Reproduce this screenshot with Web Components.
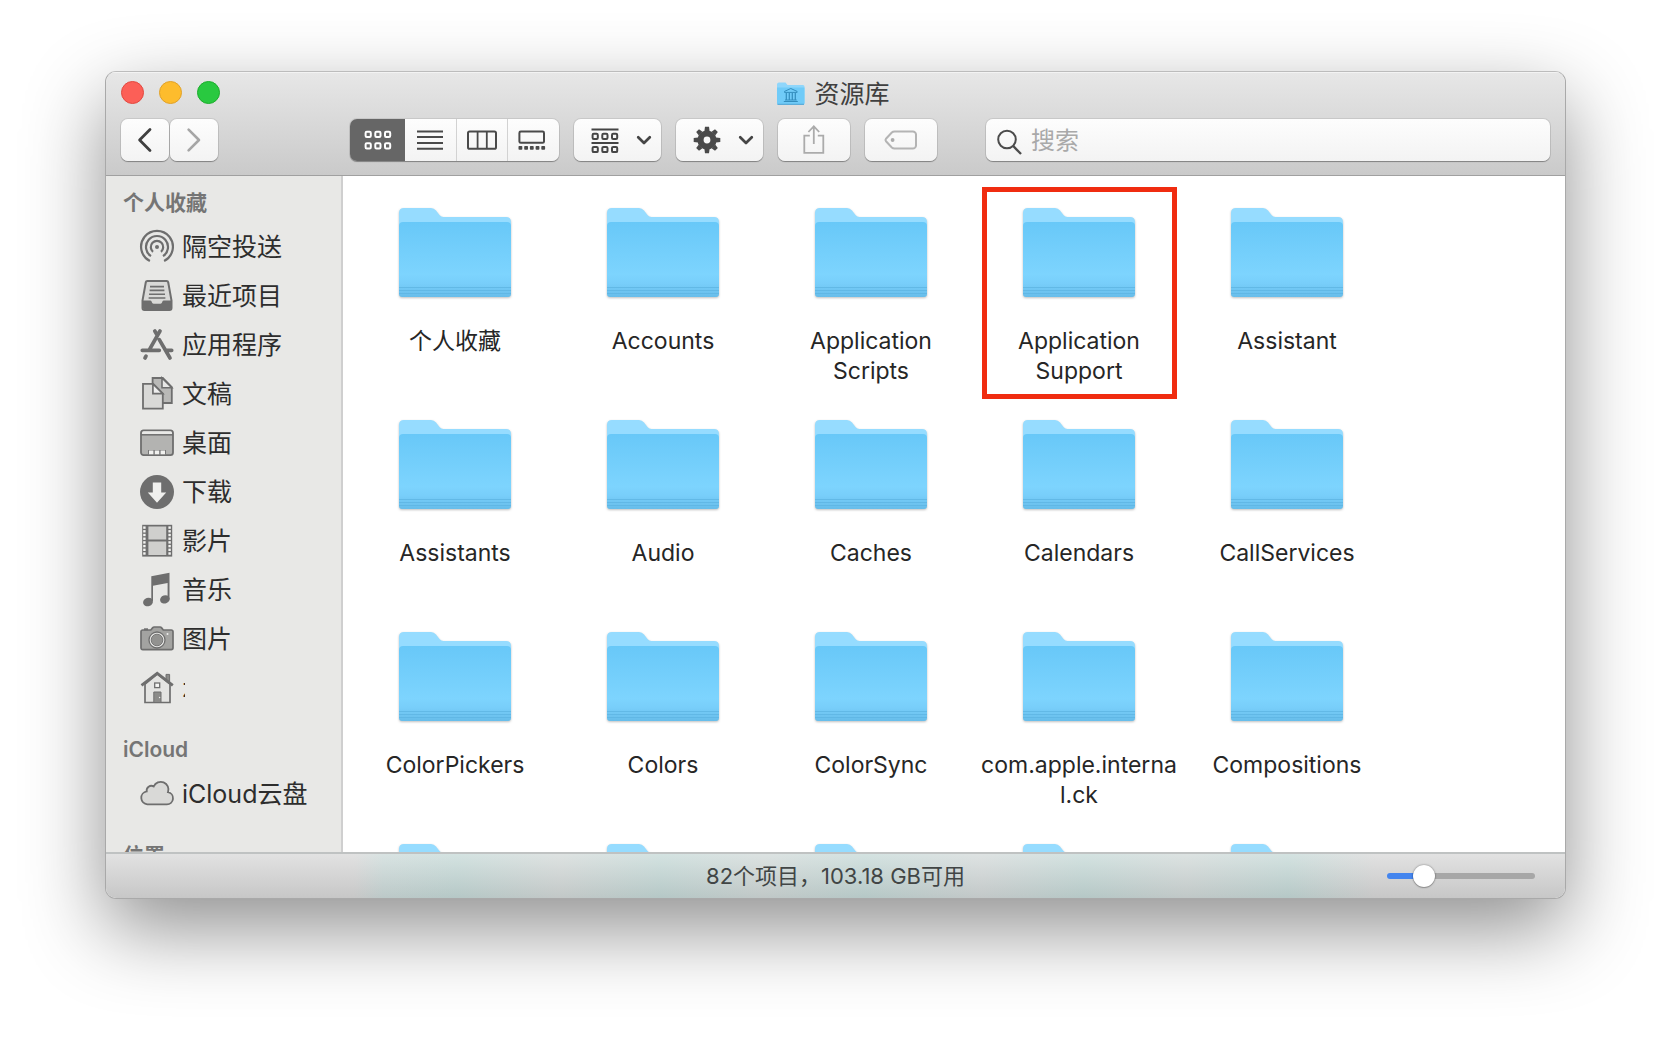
<!DOCTYPE html>
<html lang="zh-CN">
<head>
<meta charset="utf-8">
<title>资源库</title>
<style>
  html, body { margin: 0; height: 100%; background: #fff; }
  body { font-family: Inter, "Noto Sans CJK SC", sans-serif; color: #262626; }
</style>
</head>
<body>
<finder-window>
  <title-bar slot="title">资源库</title-bar>
  <tool-bar slot="toolbar"></tool-bar>
  <side-bar slot="sidebar">
    <side-group label="个人收藏">
      <side-item icon="airdrop">隔空投送</side-item>
      <side-item icon="recents">最近项目</side-item>
      <side-item icon="apps">应用程序</side-item>
      <side-item icon="docs">文稿</side-item>
      <side-item icon="desktop">桌面</side-item>
      <side-item icon="download">下载</side-item>
      <side-item icon="film">影片</side-item>
      <side-item icon="music">音乐</side-item>
      <side-item icon="camera">图片</side-item>
      <side-item icon="home" clipped>z</side-item>
    </side-group>
    <side-group label="iCloud">
      <side-item icon="cloud">iCloud云盘</side-item>
    </side-group>
    <side-group label="位置"></side-group>
  </side-bar>
  <folder-grid slot="content">
    <folder-item>个人收藏</folder-item>
    <folder-item>Accounts</folder-item>
    <folder-item>Application Scripts</folder-item>
    <folder-item marked>Application Support</folder-item>
    <folder-item>Assistant</folder-item>
    <folder-item>Assistants</folder-item>
    <folder-item>Audio</folder-item>
    <folder-item>Caches</folder-item>
    <folder-item>Calendars</folder-item>
    <folder-item>CallServices</folder-item>
    <folder-item>ColorPickers</folder-item>
    <folder-item>Colors</folder-item>
    <folder-item>ColorSync</folder-item>
    <folder-item>com.apple.internal.ck</folder-item>
    <folder-item>Compositions</folder-item>
    <folder-item></folder-item>
    <folder-item></folder-item>
    <folder-item></folder-item>
    <folder-item></folder-item>
    <folder-item></folder-item>
  </folder-grid>
  <status-bar slot="status">82个项目，103.18 GB可用</status-bar>
</finder-window>

<script>
const define = (name, html, setup) => {
  const template = document.createElement('template');
  template.innerHTML = html;
  customElements.define(name, class extends HTMLElement {
    constructor() {
      super();
      this.attachShadow({ mode: 'open' }).append(template.content.cloneNode(true));
    }
    connectedCallback() { if (setup) setup(this, this.shadowRoot); }
  });
};

const squares = (x, y, size, step) => [0, 1, 2].map(i =>
  `<rect x="${x + i * step}" y="${y}" width="${size}" height="${size}" rx="1.2"/>`).join('');
const teeth = [0, 45, 90, 135, 180, 225, 270, 315].map(a =>
  `<path d="M12.4 6 13 1.7h4l.6 4.3z" transform="rotate(${a} 15 15)"/>`).join('');
const perforations = [2.4, 27.6].map(x => [0, 1, 2, 3, 4, 5, 6, 7].map(i =>
  `<rect x="${x + .8}" y="${2.4 + i * 3.7}" width="2.4" height="2.4"/>`).join('')).join('');

/* Toolbar icons use a 30px box, sidebar icons a 34px box. */
const icons = {
  grid: [30, `<g fill="none" stroke="#fff" stroke-width="2">${squares(2.6, 6.8, 5.2, 9.7)}${squares(2.6, 18.2, 5.2, 9.7)}</g>`],
  list: [30, `<path d="M2 6.4h26M2 12.1h26M2 18h26M2 23.7h26" stroke="#4a4a4a" stroke-width="2"/>`],
  columns: [30, `<rect x="1" y="6.4" width="28" height="17.4" rx="1.6" fill="none" stroke="#4a4a4a" stroke-width="2"/><path d="M10.6 6v18M19.8 6v18" stroke="#4a4a4a" stroke-width="1.8"/>`],
  gallery: [30, `<rect x=".4" y="6.6" width="24.6" height="11.2" rx="1.4" fill="none" stroke="#4a4a4a" stroke-width="2"/><g fill="#4a4a4a">${[0,1,2,3,4].map(i => `<rect x="${-.5 + i * 5.7}" y="21" width="3.8" height="3.8" rx=".8"/>`).join('')}</g>`],
  arrange: [30, `<path d="M1.500 4.600h27M1.500 17.900h27" stroke="#454545" stroke-width="2"/><g fill="none" stroke="#454545" stroke-width="2">${squares(2.6, 8.8, 5.2, 9.7)}${squares(2.6, 21.9, 5.2, 9.7)}</g>`],
  gear: [30, `<g fill="#4a4a4a">${teeth}<path fill-rule="evenodd" d="M15 5.400a9.600 9.600 0 1 1 0 19.200 9.600 9.600 0 0 1 0-19.200zm0 6.200a3.400 3.400 0 1 0 0 6.800 3.400 3.400 0 0 0 0-6.800z"/></g>`],
  share: [30, `<g fill="none" stroke="#ababab" stroke-width="1.800"><path d="M10.800 10.700H5.300v17.200h19V10.700h-5.500M14.800 19V1.600M9.400 7l5.400-5.600L20.200 7"/></g>`],
  tag: [34, `<path d="M10.600 8.400h18.200a3.200 3.200 0 0 1 3.200 3.200v10.800a3.200 3.200 0 0 1-3.200 3.200H10.600a4 4 0 0 1-2.800-1.100L2 18.300q-1.100-1.300 0-2.600l5.800-6.200a4 4 0 0 1 2.800-1.100z" fill="none" stroke="#b4b4b4" stroke-width="2"/><circle cx="8.600" cy="17" r="1.900" fill="#ababab"/>`],
  back: [30, `<path d="M20 4.600 9.600 15 20 25.400" fill="none" stroke="#3f3f3f" stroke-width="2.800" stroke-linecap="round" stroke-linejoin="round"/>`],
  forward: [30, `<path d="M9.600 4.600 20 15 9.600 25.400" fill="none" stroke="#a6a6a6" stroke-width="2.600" stroke-linecap="round" stroke-linejoin="round"/>`],
  chevron: [16, `<path d="M2.200 5.200 8 11l5.800-5.800" fill="none" stroke="#454545" stroke-width="2.700" stroke-linecap="round" stroke-linejoin="round"/>`],
  search: [30, `<g fill="none" stroke="#4c4c4c" stroke-width="2"><circle cx="12" cy="13.500" r="8.800"/><path d="m18.200 20 7.800 8" stroke-width="2.400"/></g>`],
  library: [30, `<path d="M1 5.500Q1 3.500 3 3.500h6.500l2 2.400H27q1.500 0 1.500 1.500V24q0 1.500-1.500 1.500H2.500Q1 25.500 1 24z" fill="#8fd6fb"/><path d="M1 8.600h27.500V24q0 1.500-1.500 1.500H2.500Q1 25.500 1 24z" fill="#70cbf8"/><path d="M1.500 25.300H28" stroke="#50a3d2"/><path d="M8.500 13.400v-1l6.300-2.900 6.300 2.900v1z" fill="none" stroke="#338dbd"/><path d="M10.300 14v6.500M13.300 14v6.500M16.300 14v6.500M19.300 14v6.500M9 21h11.700M7.800 22.500h14" stroke="#338dbd" stroke-width="1.200"/>`],

  airdrop: [34, `<g fill="none" stroke="#6e6e6e" stroke-width="2.200"><path d="M9.900 31a15.900 15.900 0 1 1 14.200 0"/><path d="M11 26.200a11 11 0 1 1 12 0"/><path d="M13 21.800a6.200 6.200 0 1 1 8 0"/></g><circle cx="17" cy="17" r="2" fill="#6e6e6e"/>`],
  recents: [34, `<path d="M7.400 2h19.200a1.600 1.600 0 0 1 1.600 1.300l3.300 18.200V29a2 2 0 0 1-2 2h-25a2 2 0 0 1-2-2v-7.500L5.800 3.300A1.600 1.600 0 0 1 7.400 2z" fill="#d9d9d7" stroke="#6e6e6e" stroke-width="2"/><path d="M3 21.500h7.200q1 0 1.400 1l.5 1.200q.5 1.100 1.700 1.100h6.400q1.200 0 1.700-1.100l.5-1.200q.4-1 1.400-1H31V29a1.600 1.600 0 0 1-1.600 1.600H4.600A1.600 1.600 0 0 1 3 29z" fill="#6e6e6e"/><path d="M10 7.600h14M9.600 11.400h14.800M9 15.200h16M8.600 19h16.800" stroke="#6e6e6e" stroke-width="1.600"/>`],
  apps: [34, `<g fill="none" stroke="#6e6e6e" stroke-width="3.700" stroke-linecap="round"><path d="M14.800 3 17 6.800M20 3 9 22.300M6 28.200l-1 1.800M19.300 11.600 30 30M2.300 22.300h17M26.500 22.300h5.200"/></g>`],
  docs: [34, `<path d="M12.600 1h10.200l9 9v16H12.600z" fill="#b9b9b7" stroke="#6e6e6e" stroke-width="1.800"/><path d="M22 1v9.800h9.800z" fill="#e8e8e6" stroke="#6e6e6e" stroke-width="1.600"/><path d="M3 6.900h10.200l9.600 9.600v15.200H3z" fill="#d9d9d7" stroke="#6e6e6e" stroke-width="1.800"/><path d="M12.900 6.900v9.800h9.900z" fill="#eee" stroke="#6e6e6e" stroke-width="1.700"/>`],
  desktop: [34, `<rect x="1" y="4.400" width="32" height="24.800" rx="2.600" fill="#b3b3b1" stroke="#6e6e6e" stroke-width="1.800"/><path d="M2 8.600V7q0-1.700 1.700-1.700h26.600Q32 5.300 32 7v1.600z" fill="#e9e9e7"/><path d="M1 8.800h32" stroke="#6e6e6e" stroke-width="1.500"/><path d="M8 24h18v4.300H8z" fill="#777"/><path d="M9 24.600h4.400v3.600H9zM14.800 24.600h4.400v3.600h-4.400zM20.600 24.600H25v3.600h-4.400z" fill="#f1f1ef"/>`],
  download: [34, `<circle cx="17" cy="17" r="17" fill="#6e6e6e"/><path d="M12.800 7.400h8.400v10.200h5L17 27.700 7.800 17.600h5z" fill="#f0f0ee"/>`],
  film: [34, `<rect x="2.200" y=".8" width="30" height="31.800" fill="#6e6e6e"/><path d="M8.400 2.400h17.800v13.200H8.400zM8.400 17.400h17.800V31H8.400z" fill="#cfcfcd"/><g fill="#f4f4f2">${perforations}</g>`],
  music: [34, `<path d="M11.300 3.300 29.500-.2v26.500h-1.900V10L13 12.700V28h-1.700z" fill="#6e6e6e"/><ellipse cx="8" cy="29" rx="5" ry="4.200" transform="rotate(-18 8 29)" fill="#6e6e6e"/><ellipse cx="24.900" cy="26.400" rx="4.900" ry="4.100" transform="rotate(-18 24.900 26.400)" fill="#6e6e6e"/>`],
  camera: [34, `<path d="M2.800 8h8l2-2.400q.5-.6 1.300-.6h6q.8 0 1.300.6L23.300 8h7.900q1.800 0 1.800 1.800v16q0 1.800-1.800 1.800H2.800Q1 27.600 1 25.800v-16Q1 8 2.800 8z" fill="#a3a3a1" stroke="#6e6e6e" stroke-width="1.700"/><path d="M4 7.300h4" stroke="#6e6e6e" stroke-width="2"/><circle cx="17" cy="18" r="8" fill="#e6e6e4" stroke="#6e6e6e" stroke-width="1.300"/><circle cx="17" cy="18" r="5.800" fill="#929290" stroke="#777" stroke-width="1"/><circle cx="27.500" cy="12" r="1" fill="#eee"/>`],
  home: [34, `<path d="M5 13v18.500h25V13L17.300 3z" fill="#e4e4e2" stroke="#6e6e6e" stroke-width="1.700"/><path d="M26 3.400h3.600v9L26 9z" fill="#8b8b89" stroke="#6e6e6e"/><path d="M1.500 14.300 17.200 2.200l15.600 12.100" fill="none" stroke="#6e6e6e" stroke-width="2.800"/><rect x="14.700" y="12" width="5" height="4.600" fill="#f6f6f4" stroke="#6e6e6e" stroke-width="1.300"/><path d="M13.800 21h7.200v10.500h-7.200z" fill="#8b8b89" stroke="#6e6e6e"/><circle cx="19.600" cy="26.500" r=".7" fill="#eee"/>`],
  cloud: [34, `<path d="M7.400 27.300h19.400a6.100 6.100 0 0 0 1.200-12.100 7.700 7.700 0 0 0-14.300-5.700 4.700 4.700 0 0 0-7 4.900A6.500 6.500 0 0 0 7.400 27.300z" fill="#d9d9d7" stroke="#6e6e6e" stroke-width="1.800"/>`]
};

define('finder-icon', `
  <style>:host { display: block; flex: none; } svg { display: block; overflow: visible; }</style>
`, (host, root) => {
  const [size, body] = icons[host.getAttribute('name')];
  root.innerHTML += `<svg width="${size}" height="${size}" viewBox="0 0 ${size} ${size}" aria-hidden="true">${body}</svg>`;
});

define('finder-window', `
  <style>
    :host { display: flex; box-sizing: border-box; height: 100vh; padding: 71px 105px 139px; }
    .frame { flex: 1; min-width: 0; display: flex; flex-direction: column; border: 1px solid #a9a9a9; border-top-color: #bcbcbc;
      border-radius: 11px; overflow: hidden; box-shadow: 0 30px 80px rgba(0,0,0,.44); background: #fff; }
    header { background: linear-gradient(#e7e7e7, #cacaca); border-bottom: 1px solid #a0a0a0; box-shadow: inset 0 1px #f3f3f3; }
    .body { flex: 1; min-height: 0; display: flex; }
  </style>
  <section class="frame">
    <header><slot name="title"></slot><slot name="toolbar"></slot></header>
    <div class="body"><slot name="sidebar"></slot><slot name="content"></slot></div>
    <slot name="status"></slot>
  </section>
`);

define('title-bar', `
  <style>
    :host { display: grid; grid-template-columns: 1fr auto 1fr; align-items: center; height: 41px; padding: 0 15px; }
    .lights { display: flex; gap: 15px; }
    button { width: 23px; height: 23px; padding: 0; border: 1px solid; border-radius: 50%; }
    .close { background: #fc5f57; border-color: #e2483f; }
    .min { background: #fdbc2d; border-color: #e0a129; }
    .zoom { background: #29c940; border-color: #1dad2c; }
    h1 { display: flex; align-items: center; gap: 8px; margin: 0; padding: 2px 5px 0 0; font-size: 25px; line-height: 30px; font-weight: 400; color: #404040; }
  </style>
  <div class="lights">
    <button class="close" aria-label="关闭"></button>
    <button class="min" aria-label="最小化"></button>
    <button class="zoom" aria-label="缩放"></button>
  </div>
  <h1><finder-icon name="library"></finder-icon><span><slot></slot></span></h1>
`);

define('tool-bar', `
  <style>
    :host { display: flex; gap: 15px; padding: 6px 15px 14px; }
    button, label { box-sizing: border-box; height: 42px; display: flex; align-items: center; justify-content: center; padding: 0;
      border: 0; border-radius: 7px; background: linear-gradient(#fdfdfd, #f3f3f3);
      box-shadow: 0 0 0 1px rgba(0,0,0,.08), 0 1px 1px rgba(0,0,0,.32); }
    .nav { display: flex; gap: 1px; margin-right: 117px; }
    .nav button { width: 48px; }
    .views { display: flex; width: 209px; border-radius: 7px; box-shadow: 0 0 0 1px rgba(0,0,0,.08), 0 1px 1px rgba(0,0,0,.32); }
    .views button { flex: 1; border-radius: 0; box-shadow: none; border-left: 1px solid #d2d2d2; }
    .views button:first-child { flex: none; width: 55px; border: 0; border-radius: 7px 0 0 7px; background: #666; }
    .views button:nth-child(2) { border: 0; }
    .views button:last-child { border-radius: 0 7px 7px 0; }
    .menu { width: 87px; gap: 16px; padding-left: 7px; }
    .wide { width: 72px; }
    label { flex: 1; min-width: 0; justify-content: flex-start; gap: 6px; padding: 2px 9px 0; margin-left: 34px; }
    input { flex: 1; min-width: 0; padding: 0; border: 0; outline: 0; background: none; font: inherit; font-size: 24px; line-height: 36px; color: #333; }
    input::placeholder { color: #a9a9a9; opacity: 1; }
  </style>
  <div class="nav">
    <button aria-label="后退"><finder-icon name="back"></finder-icon></button>
    <button aria-label="前进"><finder-icon name="forward"></finder-icon></button>
  </div>
  <div class="views">
    <button aria-label="图标" aria-pressed="true"><finder-icon name="grid"></finder-icon></button>
    <button aria-label="列表"><finder-icon name="list"></finder-icon></button>
    <button aria-label="分栏"><finder-icon name="columns"></finder-icon></button>
    <button aria-label="画廊"><finder-icon name="gallery"></finder-icon></button>
  </div>
  <button class="menu" aria-label="排列"><finder-icon name="arrange"></finder-icon><finder-icon name="chevron"></finder-icon></button>
  <button class="menu" aria-label="操作"><finder-icon name="gear"></finder-icon><finder-icon name="chevron"></finder-icon></button>
  <button class="wide" aria-label="共享"><finder-icon name="share"></finder-icon></button>
  <button class="wide" aria-label="标签"><finder-icon name="tag"></finder-icon></button>
  <label><finder-icon name="search"></finder-icon><input type="text" placeholder="搜索" aria-label="搜索"></label>
`);

define('side-bar', `
  <style>
    :host { display: flex; flex-direction: column; gap: 19px; flex: none; box-sizing: border-box; width: 237px; padding: 8px 0 0;
      overflow: hidden; background: #e8e8e6; border-right: 2px solid #cfcfcf; }
  </style>
  <slot></slot>
`);

define('side-group', `
  <style>
    :host { display: block; flex: none; }
    h2 { margin: 0; padding-left: 17px; font-size: 21px; line-height: 38px; font-weight: 600; color: #757575; }
  </style>
  <h2></h2><nav><slot></slot></nav>
`, (host, root) => { root.querySelector('h2').textContent = host.getAttribute('label'); });

define('side-item', `
  <style>
    :host { display: block; }
    a { display: flex; align-items: center; gap: 8px; height: 49px; padding-left: 34px; color: #2d2d2d; text-decoration: none; font-size: 25px; line-height: 36px; }
    :host([clipped]) span { width: 3px; overflow: hidden; }
  </style>
  <a href="#"><span><slot></slot></span></a>
`, (host, root) => {
  const icon = document.createElement('finder-icon');
  icon.setAttribute('name', host.getAttribute('icon'));
  root.querySelector('a').prepend(icon);
});

define('folder-grid', `
  <style>
    :host { flex: 1; min-width: 0; display: grid; grid-template-columns: repeat(auto-fill, 208px); grid-auto-rows: 212px;
      align-content: start; padding: 11px 0 0 8px; overflow: hidden; background: #fff; }
  </style>
  <slot></slot>
`);

define('folder-item', `
  <style>
    :host { position: relative; display: flex; flex-direction: column; align-items: center; gap: 29px; padding: 21px 6px 0; }
    svg { display: block; flex: none; overflow: visible; filter: drop-shadow(0 1px 1px rgba(0,0,0,.25)); }
    span { display: block; width: 196px; text-align: center; font-size: 23px; line-height: 30px; overflow-wrap: anywhere; color: #262626; }
    :host([marked])::after { content: ""; position: absolute; inset: 0 6px 0 7px; border: 5px solid #f02c10; }
  </style>
  <svg width="112" height="89" viewBox="0 0 112 89" aria-hidden="true">
    <defs><linearGradient id="front" x1="0" y1="0" x2="0" y2="1">
      <stop offset="0" stop-color="#68c8f8"/><stop offset=".7" stop-color="#7dd4fe"/><stop offset=".82" stop-color="#78cefa"/><stop offset="1" stop-color="#67bdea"/>
    </linearGradient></defs>
    <path d="M0 5Q0 0 5 0h27q3 0 5 2.500l3.500 4.500q1.500 2 4 2H107q5 0 5 5v30H0z" fill="#96dcff"/>
    <path d="M0 18q0-4 4-4h104q4 0 4 4v68q0 3-3 3H3q-3 0-3-3z" fill="url(#front)"/>
    <path d="M0 79.500h112M0 82.500h112M0 85.500h112" stroke="#5db4e2" stroke-width="1" opacity=".75"/>
  </svg>
  <span><slot></slot></span>
`);

define('status-bar', `
  <style>
    :host { display: grid; grid-template-columns: 1fr auto 1fr; align-items: center; box-sizing: border-box; height: 46px; padding: 0 30px; flex: none;
      border-top: 2px solid #bfc2c2; font-size: 22px; line-height: 30px; color: #414545;
      background: linear-gradient(rgba(255,255,255,.25), rgba(0,0,0,.08)),
        linear-gradient(90deg, #d8d8d8 17%, #ccdad9 19%, #c5d9d7 24%, #d3d9d8 31%, #c5d9d7 38%, #d1d9d8 45%, #c5d9d7 52%, #d3d9d9 60%, #c5d9d7 67%, #d1d9d8 74%, #c5d9d7 81%, #d8d8d8 87%); }
    span { grid-column: 2; }
    input { justify-self: end; width: 148px; height: 22px; margin: 0; appearance: none; background: none; }
    input::-webkit-slider-runnable-track { height: 6px; border-radius: 3px; background: linear-gradient(90deg, #4485ee 25%, #a7a7a7 25%); }
    input::-webkit-slider-thumb { appearance: none; width: 22px; height: 22px; margin-top: -8px; border-radius: 50%; background: #fff; box-shadow: 0 0 2px rgba(0,0,0,.5), 0 1px 1px rgba(0,0,0,.2); }
  </style>
  <span><slot></slot></span>
  <input type="range" min="0" max="100" value="21" aria-label="图标大小">
`);
</script>
</body>
</html>
